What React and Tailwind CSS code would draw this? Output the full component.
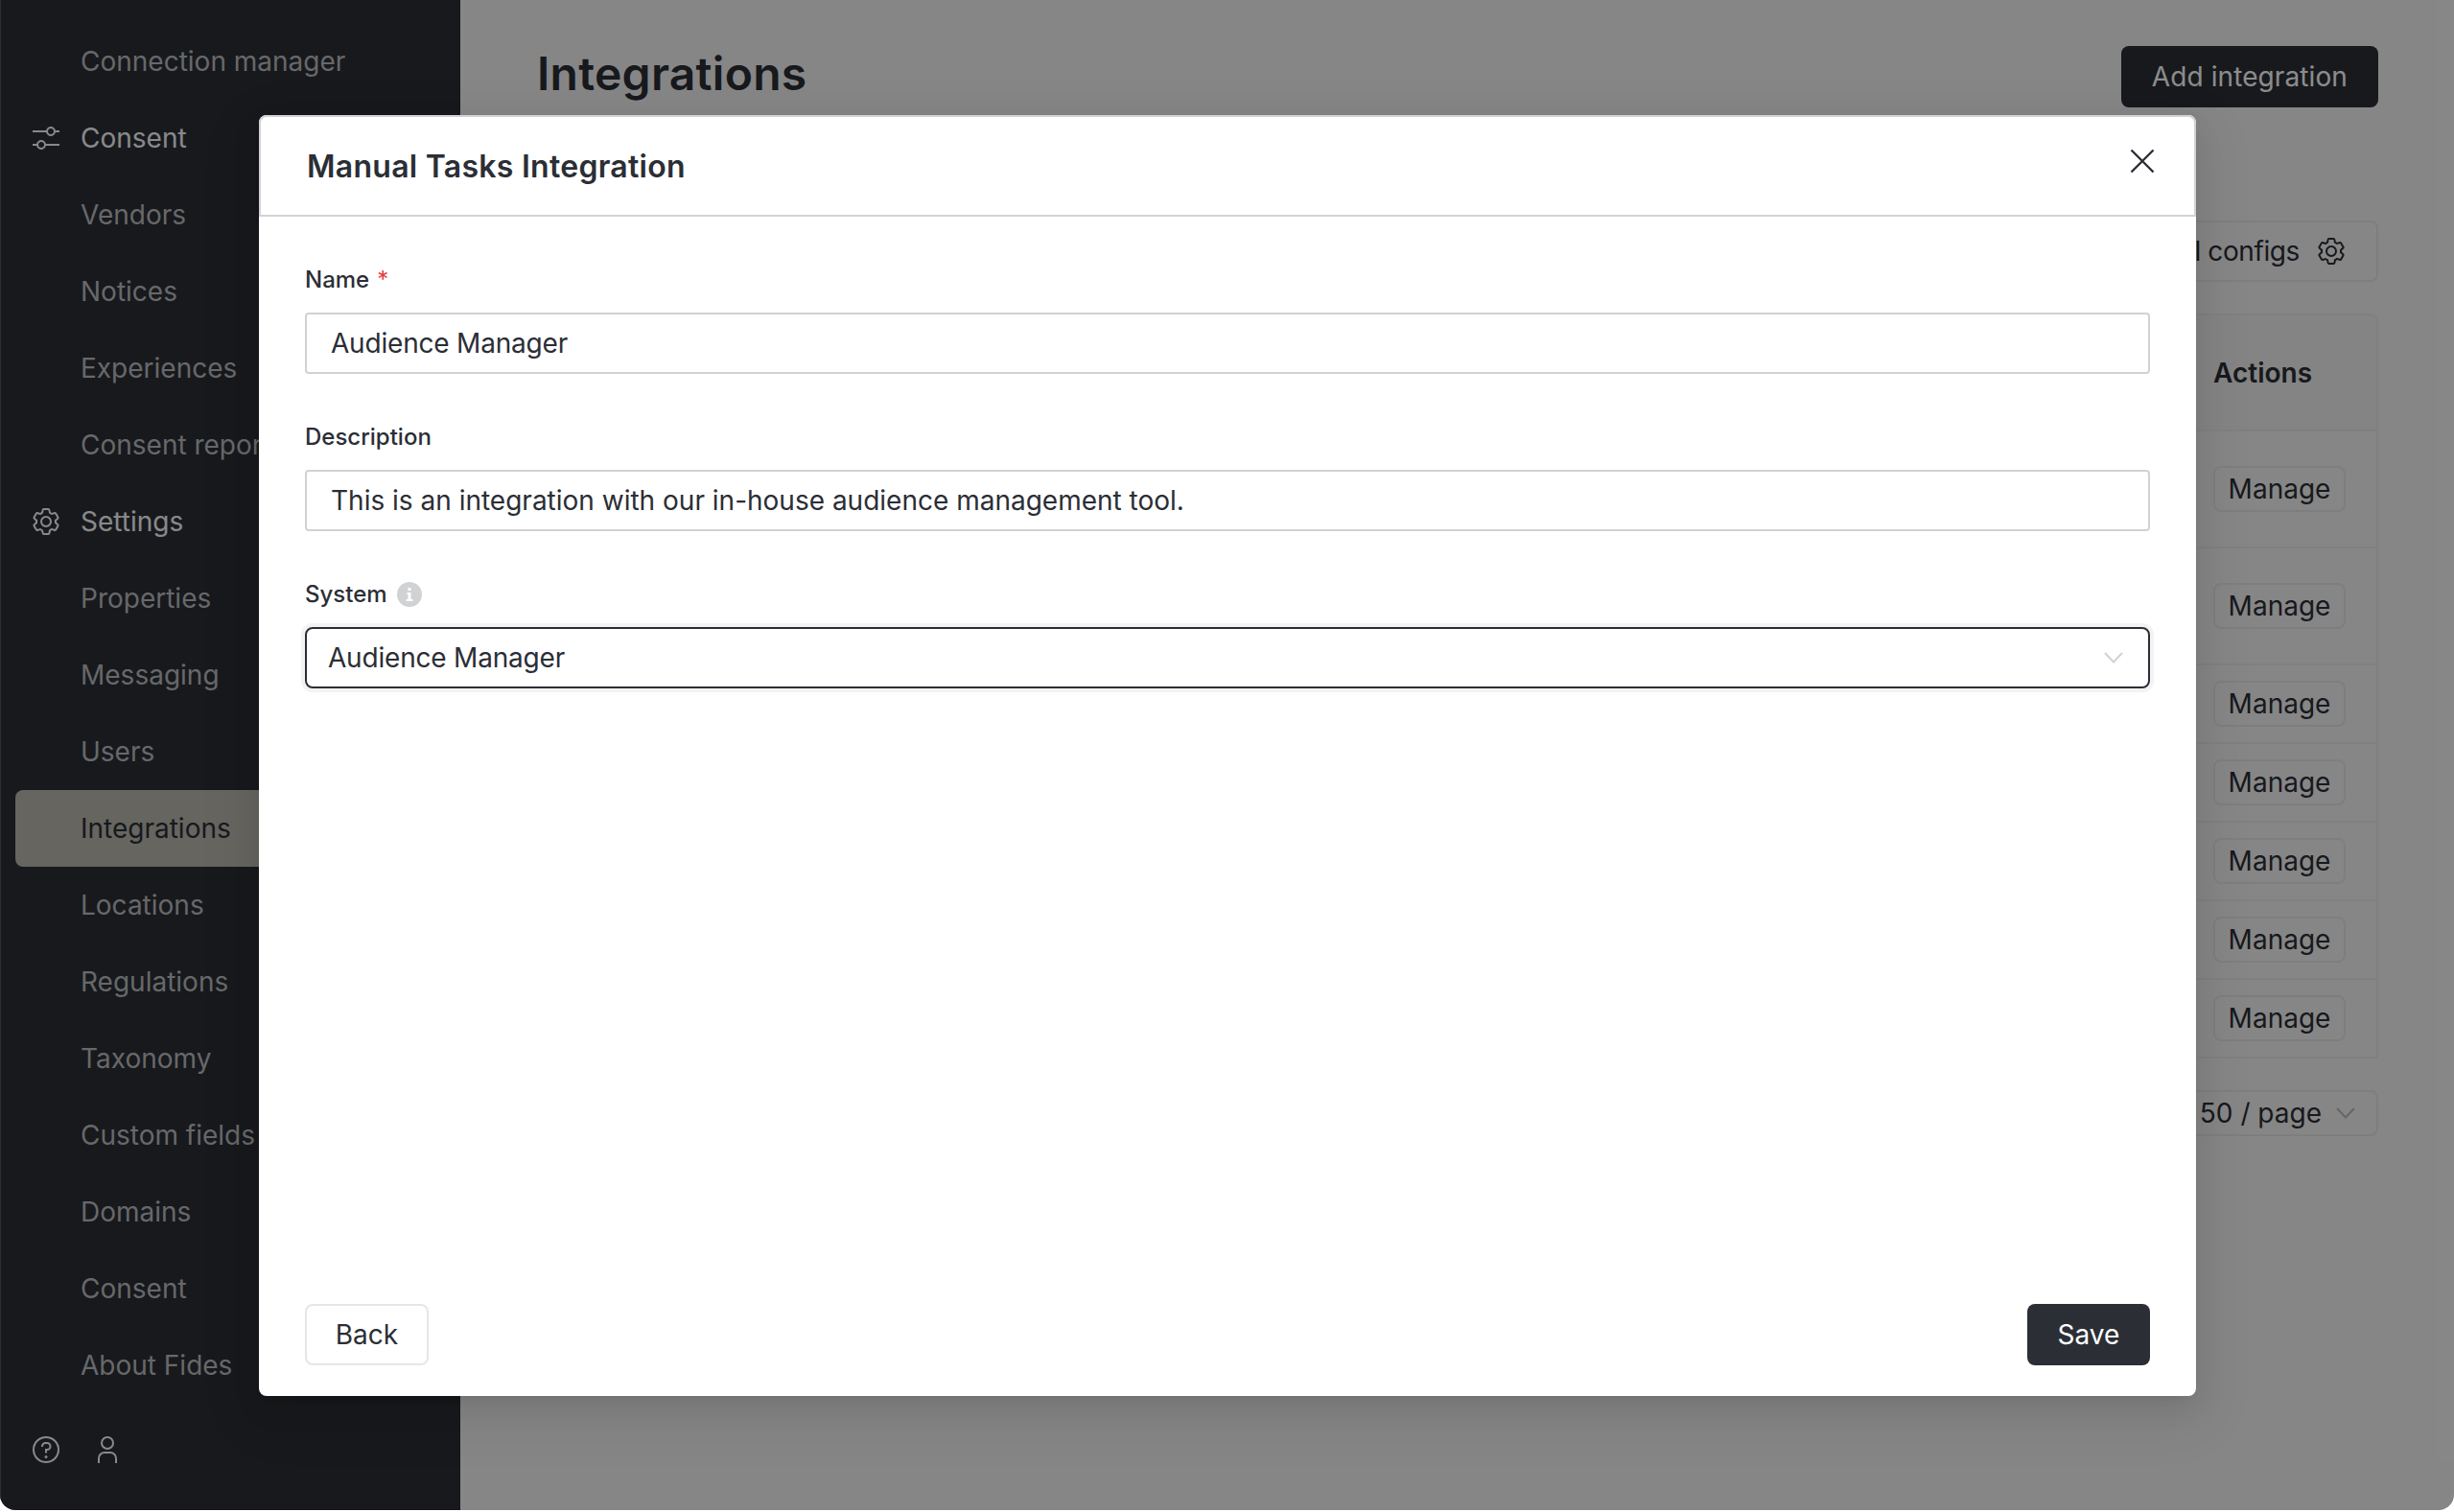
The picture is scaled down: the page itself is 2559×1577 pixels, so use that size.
const GEAR = "M27,16.76c0-.25,0-.5,0-.76s0-.51,0-.77l1.92-1.68A2,2,0,0,0,29.3,11L26.94,7a2,2,0,0,0-1.73-1,2,2,0,0,0-.64.1l-2.43.82a11.35,11.35,0,0,0-1.31-.75l-.51-2.52a2,2,0,0,0-2-1.61H13.64a2,2,0,0,0-2,1.61l-.51,2.52a11.48,11.48,0,0,0-1.32.75L7.43,6.06A2,2,0,0,0,6.79,6,2,2,0,0,0,5.06,7L2.7,11a2,2,0,0,0,.41,2.51L5,15.24c0,.25,0,.5,0,.76s0,.51,0,.77L3.11,18.45A2,2,0,0,0,2.7,21L5.06,25a2,2,0,0,0,1.73,1,2,2,0,0,0,.64-.1l2.43-.82a11.35,11.35,0,0,0,1.31.75l.51,2.52a2,2,0,0,0,2,1.61h4.72a2,2,0,0,0,2-1.61l.51-2.52a11.48,11.48,0,0,0,1.32-.75l2.42.82a2,2,0,0,0,.64.1,2,2,0,0,0,1.73-1L29.3,21a2,2,0,0,0-.41-2.51ZM25.21,24l-3.43-1.16a8.86,8.86,0,0,1-2.71,1.57L18.36,28H13.64l-.71-3.55a9.36,9.36,0,0,1-2.7-1.57L6.79,24,4.43,20l2.72-2.4a8.9,8.9,0,0,1,0-3.13L4.43,12,6.79,8l3.43,1.16a8.86,8.86,0,0,1,2.71-1.57L13.64,4h4.72l.71,3.55a9.36,9.36,0,0,1,2.7,1.57L25.21,8,27.57,12l-2.72,2.4a8.9,8.9,0,0,1,0,3.13L27.57,20ZM16,22a6,6,0,1,1,6-6A5.94,5.94,0,0,1,16,22Zm0-10a3.91,3.91,0,0,0-4,4,3.91,3.91,0,0,0,4,4,3.91,3.91,0,0,0,4-4A3.91,3.91,0,0,0,16,12Z"

function GearIcon() {
  return (
    <svg width="32" height="32" viewBox="0 0 32 32" fill="currentColor" className="shrink-0">
      <path d={GEAR} />
    </svg>
  )
}

function SlidersIcon() {
  return (
    <svg width="32" height="32" viewBox="0 0 32 32" fill="currentColor" className="shrink-0">
      <path d="M30,8h-4.1c-0.5-2.3-2.5-4-4.9-4s-4.4,1.7-4.9,4H2v2h14.1c0.5,2.3,2.5,4,4.9,4s4.4-1.7,4.9-4H30V8z M21,12c-1.7,0-3-1.3-3-3s1.3-3,3-3s3,1.3,3,3S22.7,12,21,12z" />
      <path d="M2,24h4.1c0.5,2.3,2.5,4,4.9,4s4.4-1.7,4.9-4H30v-2H15.9c-0.5-2.3-2.5-4-4.9-4s-4.4,1.7-4.9,4H2V24z M11,20c1.7,0,3,1.3,3,3s-1.3,3-3,3s-3-1.3-3-3S9.3,20,11,20z" />
    </svg>
  )
}

function HelpIcon() {
  return (
    <svg width="32" height="32" viewBox="0 0 32 32" fill="currentColor" className="shrink-0">
      <path d="M16,2A14,14,0,1,0,30,16,14,14,0,0,0,16,2Zm0,26A12,12,0,1,1,28,16,12,12,0,0,1,16,28Z" />
      <circle cx="16" cy="23.5" r="1.5" />
      <path d="M17,8H15.5A4.49,4.49,0,0,0,11,12.5V13h2v-.5A2.5,2.5,0,0,1,15.5,10H17a2.5,2.5,0,0,1,0,5H15v4.5h2V17a4.5,4.5,0,0,0,0-9Z" />
    </svg>
  )
}

function UserIcon() {
  return (
    <svg width="32" height="32" viewBox="0 0 32 32" fill="currentColor" className="shrink-0">
      <path d="M16,4a5,5,0,1,1-5,5,5,5,0,0,1,5-5m0-2a7,7,0,1,0,7,7A7,7,0,0,0,16,2Z" />
      <path d="M26,30H24V25a5,5,0,0,0-5-5H13a5,5,0,0,0-5,5v5H6V25a7,7,0,0,1,7-7h6a7,7,0,0,1,7,7Z" />
    </svg>
  )
}

function Chevron({ className }) {
  return (
    <svg width="20" height="12" viewBox="0 0 20 12" fill="none" stroke="currentColor" strokeWidth="2" className={className}>
      <path d="M1 1l9 9.5L19 1" />
    </svg>
  )
}

const navItems = [
  { label: "Connection manager" },
  { label: "Consent", icon: <SlidersIcon /> },
  { label: "Vendors" },
  { label: "Notices" },
  { label: "Experiences" },
  { label: "Consent reports" },
  { label: "Settings", icon: <GearIcon /> },
  { label: "Properties" },
  { label: "Messaging" },
  { label: "Users" },
  { label: "Integrations", active: true },
  { label: "Locations" },
  { label: "Regulations" },
  { label: "Taxonomy" },
  { label: "Custom fields" },
  { label: "Domains" },
  { label: "Consent" },
  { label: "About Fides" },
]

function NavItem({ label, icon, active }) {
  if (active) {
    return (
      <div className="h-20 flex items-center pl-[68px] rounded-[8px] bg-[#bbb8af] text-[#2b2e35]">
        {label}
      </div>
    )
  }
  if (icon) {
    return (
      <div className="h-20 flex items-center gap-[20px] pl-[16px] text-[#fafafa]">
        {icon}
        {label}
      </div>
    )
  }
  return <div className="h-20 flex items-center pl-[68px] text-[#bcbdc0]">{label}</div>
}

function Sidebar() {
  return (
    <div className="w-[480px] shrink-0 h-full bg-[#2b2e35] flex flex-col pt-[24px] px-[16px] text-[28px] whitespace-nowrap shadow-[inset_1px_0_0_#555555]">
      {navItems.map((item, i) => (
        <NavItem key={i} {...item} />
      ))}
      <div className="flex items-center gap-[32px] pl-[16px] mt-[32px] text-[#fafafa]">
        <HelpIcon />
        <UserIcon />
      </div>
    </div>
  )
}

function Background() {
  const rowHeights = ["h-[122px]", "h-[122px]", "h-[82px]", "h-[82px]", "h-[82px]", "h-[82px]", "h-[82px]"]
  return (
    <div className="flex-1 pt-[48px] pl-[80px] pr-[79px] text-[#2b2e35] text-[28px]">
      <div className="flex items-start justify-between h-16">
        <h1 className="text-[48px] leading-[58px] font-semibold tracking-[0.27px]">Integrations</h1>
        <button className="h-16 px-[32px] rounded-[8px] bg-[#2b2e35] text-white tracking-[0.1px]">Add integration</button>
      </div>
      <div className="flex justify-end mt-[118px]">
        <button className="h-16 flex items-center gap-[17px] pl-[32px] pr-[31px] rounded-[8px] border-2 border-[#e6e6e8]">
          <span className="tracking-[-0.4px]">Global configs</span>
          <GearIcon />
        </button>
      </div>
      <div className="mt-[33px] rounded-t-[8px] border-x-2 border-t-2 border-[#eaeaec]">
        <div className="h-[121px] flex items-center justify-end bg-[#f0f0f1] rounded-t-[8px] border-b-2 border-[#eaeaec]">
          <div className="w-[170px] font-semibold">Actions</div>
        </div>
        {rowHeights.map((h, i) => (
          <div key={i} className={`${h} flex items-center justify-end border-b-2 border-[#eaeaec]`}>
            <div className="w-[170px]">
              <button className="h-12 w-[138px] rounded-[8px] border-2 border-[#e6e6e8]">Manage</button>
            </div>
          </div>
        ))}
      </div>
      <div className="flex justify-end mt-[33px]">
        <div className="h-12 flex items-center gap-[15px] pl-[16px] pr-[22px] rounded-[8px] border-2 border-[#e6e6e8]">
          50 / page
          <Chevron className="text-[#b8babe]" />
        </div>
      </div>
    </div>
  )
}

function Label({ children }) {
  return <div className="h-8 flex items-center gap-[8px] text-[24px] font-medium mb-[18px]">{children}</div>
}

function TextField({ value, className }) {
  return (
    <input
      readOnly
      value={value}
      className={`block w-full h-16 pl-[25px] pr-[24px] border-2 border-[#d1d2d4] rounded-[4px] text-[28px] text-[#2b2e35] outline-none ${className}`}
    />
  )
}

function InfoIcon() {
  return (
    <svg width="26" height="26" viewBox="0 0 26 26" className="ml-[2px]">
      <circle cx="13" cy="13" r="13" fill="#d1d2d4" />
      <rect x="11.5" y="6" width="3" height="3" fill="#ffffff" />
      <path d="M10.5 11h4v7h2v2h-7v-2h2v-5h-1z" fill="#ffffff" />
    </svg>
  )
}

function Modal() {
  return (
    <div className="absolute left-[270px] top-[120px] w-[2020px] h-[1336px] flex flex-col bg-white rounded-[8px] text-[#2b2e35] shadow-[0_12px_32px_0_rgba(0,0,0,0.08),0_6px_12px_-8px_rgba(0,0,0,0.12),0_18px_56px_16px_rgba(0,0,0,0.05)]">
      <div className="h-[106px] shrink-0 flex items-start justify-between pl-[48px] pr-[41px] border-2 border-[#d1d2d4] border-b-2 rounded-t-[8px] -mb-px">
        <div className="mt-[32px] text-[32px] leading-[40px] font-semibold tracking-[0.27px]">Manual Tasks Integration</div>
        <svg width="26" height="26" viewBox="0 0 26 26" fill="none" stroke="#2b2e35" strokeWidth="2.4" className="mt-[33px]">
          <path d="M1.5 1.5l23 23M24.5 1.5l-23 23" />
        </svg>
      </div>
      <div className="flex-1 flex flex-col pt-[51px] pb-[32px] px-[48px]">
        <div className="h-[164px]">
          <Label>
            Name <span className="text-[#e53e3e] font-normal">*</span>
          </Label>
          <TextField value="Audience Manager" className="tracking-[-0.2px]" />
        </div>
        <div className="h-[164px]">
          <Label>Description</Label>
          <TextField value="This is an integration with our in-house audience management tool." className="tracking-normal" />
        </div>
        <div>
          <Label>
            System <InfoIcon />
          </Label>
          <div className="h-16 flex items-center justify-between pl-[22px] pr-[26px] border-2 border-[#2b2e35] rounded-[8px] text-[28px] shadow-[0_0_0_4px_#f3f3f3]">
            <span className="tracking-[-0.2px]">Audience Manager</span>
            <Chevron className="text-[#d1d2d4]" />
          </div>
        </div>
        <div className="mt-auto flex items-center justify-between text-[28px]">
          <button className="h-16 w-[129px] rounded-[8px] border-2 border-[#e6e6e8] bg-white">Back</button>
          <button className="h-16 w-[128px] rounded-[8px] bg-[#2b2e35] text-white">Save</button>
        </div>
      </div>
    </div>
  )
}

export default function App() {
  return (
    <div className="h-[1577px] bg-white font-[Inter,sans-serif] overflow-hidden">
      <div className="relative h-[1575px] flex rounded-b-[16px] overflow-hidden bg-[#f5f5f5]">
        <Sidebar />
        <Background />
        <div className="absolute inset-0 bg-black/45" />
        <Modal />
      </div>
    </div>
  )
}
